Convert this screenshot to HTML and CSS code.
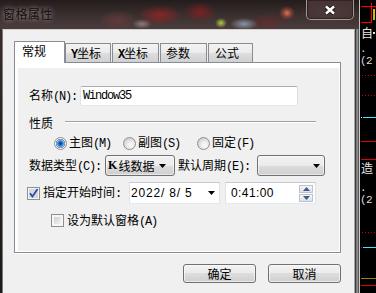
FILE: index.html
```html
<!DOCTYPE html>
<html lang="zh">
<head>
<meta charset="utf-8">
<title>窗格属性</title>
<link rel="stylesheet" href="styles.css">
</head>
<body>
<div class="screen">
  <div class="window">
    <div class="titlebar">
      <span class="title">窗格属性</span>
      <div class="close">
        <svg width="12" height="10" viewBox="0 0 12 10"><path d="M2 1.5L10 8.5M10 1.5L2 8.5" stroke="#241a1a" stroke-width="4.4"/><path d="M2 1.5L10 8.5M10 1.5L2 8.5" stroke="#ffffff" stroke-width="2.4"/></svg>
      </div>
    </div>
    <div class="frame">
      <div class="frame-left"></div>
      <div class="client">
        <div class="tabs">
          <div class="tab sel">常规</div>
          <div class="tab w46"><span class="a b">Y</span>坐标</div>
          <div class="tab w47"><span class="a b">X</span>坐标</div>
          <div class="tab w47">参数</div>
          <div class="tab w45">公式</div>
        </div>
        <div class="panel">
          <div class="page">
            <div class="row r-name">
              <span class="lbl">名称<span class="a">(N):</span></span>
              <div class="edit"><span class="a">Window35</span></div>
            </div>
            <div class="row r-group">
              <span class="lbl">性质</span><span class="sep"></span>
            </div>
            <div class="row r-radio">
              <span class="radio on"></span><span class="rl">主图<span class="a">(M)</span></span>
              <span class="radio m12"></span><span class="rl">副图<span class="a">(S)</span></span>
              <span class="radio m17"></span><span class="rl">固定<span class="a">(F)</span></span>
            </div>
            <div class="row r-data">
              <span class="lbl">数据类型<span class="a">(C):</span></span>
              <div class="combo cb1"><span class="a b k">K</span>线数据<svg class="arr" width="7" height="4" viewBox="0 0 7 4"><path d="M0 0H7L3.5 4Z"/></svg></div>
              <span class="lbl lbl2">默认周期<span class="a">(E):</span></span>
              <div class="combo cb2"><svg class="arr" width="7" height="4" viewBox="0 0 7 4"><path d="M0 0H7L3.5 4Z"/></svg></div>
            </div>
            <div class="row r-time">
              <svg class="cbx" width="13" height="13" viewBox="0 0 13 13"><rect x="0.5" y="0.5" width="12" height="12" fill="#f6f6f6" stroke="#8e8f8f"/><rect x="2" y="2" width="9" height="9" fill="#d3d8e6"/><path d="M3 6.2L5.4 9.6L10.6 2" fill="none" stroke="#2b4b9b" stroke-width="1.7"/></svg>
              <span class="tl">指定开始时间<span class="a">:</span></span>
              <div class="field date"><span class="num d">2022/ 8/ 5</span><svg class="arr" width="7" height="4" viewBox="0 0 7 4"><path d="M0 0H7L3.5 4Z"/></svg></div>
              <div class="field time"><span class="num t">0:41:00</span>
                <div class="spin">
                  <b><svg width="7" height="4" viewBox="0 0 7 4"><path d="M0 4H7L3.5 0Z" fill="#3f5b8c"/></svg></b>
                  <b><svg width="7" height="4" viewBox="0 0 7 4"><path d="M0 0H7L3.5 4Z" fill="#3f5b8c"/></svg></b>
                </div>
              </div>
            </div>
            <div class="row r-def">
              <span class="cb-off"></span>
              <span class="tl">设为默认窗格<span class="a">(A)</span></span>
            </div>
          </div>
        </div>
        <div class="buttons">
          <div class="btn">确定</div>
          <div class="btn">取消</div>
        </div>
      </div>
      <div class="frame-right"></div>
    </div>
  </div>
  <div class="chart">
    <i class="k1"></i><i class="k2"></i><i class="k3"></i><i class="k4"></i>
    <span class="ct ct1">自</span><i class="dw1"></i>
    <span class="cn cn1">.(2</span>
    <i class="dot d75"></i><i class="dot d95"></i>
    <i class="wd w117"></i><i class="cy c117"></i>
    <i class="rl2 r141"></i><i class="rl2 r159"></i>
    <span class="ct ct2">造</span>
    <span class="cn cn2">.(2</span>
    <i class="dot d232"></i>
    <i class="rd w247"></i><i class="cy c247"></i>
    <i class="ol o278"></i>
    <i class="rl2 r285"></i>
  </div>
</div>
</body>
</html>
```

FILE: styles.css
```css
* { box-sizing: border-box; }
html, body { margin: 0; padding: 0; }
body {
  width: 376px;
  height: 293px;
  overflow: hidden;
  background: #000;
  font-family: "Noto Sans CJK SC", sans-serif;
  font-size: 12px;
  color: #000;
}
.screen { display: flex; width: 376px; height: 293px; }
.window { width: 360px; height: 293px; display: flex; flex-direction: column; flex: none; }

.titlebar {
  height: 29px;
  flex: none;
  display: flex;
  align-items: flex-start;
  background:
    linear-gradient(to right, transparent 359px, #c4c4c4 359px 360px),
    radial-gradient(ellipse 6px 5px at 221px 23px, rgba(185,205,80,0.95) 0, rgba(150,170,60,0.6) 55%, transparent 100%),
    radial-gradient(ellipse 8px 7px at 287px 13px, rgba(225,120,80,0.95) 0, rgba(180,80,60,0.5) 55%, transparent 100%),
    radial-gradient(ellipse 14px 6px at 244px 24px, rgba(150,165,185,0.85) 0, transparent 100%),
    radial-gradient(ellipse 10px 5px at 142px 24px, rgba(160,140,140,0.8) 0, transparent 100%),
    radial-gradient(ellipse 22px 10px at 160px 15px, rgba(150,35,35,0.85) 0, transparent 100%),
    radial-gradient(ellipse 16px 10px at 200px 12px, rgba(140,30,30,0.8) 0, transparent 100%),
    radial-gradient(ellipse 20px 10px at 118px 20px, rgba(110,60,60,0.7) 0, transparent 100%),
    radial-gradient(ellipse 18px 9px at 268px 22px, rgba(110,40,40,0.6) 0, transparent 100%),
    radial-gradient(ellipse 30px 12px at 330px 14px, rgba(90,70,70,0.6) 0, transparent 100%),
    linear-gradient(#241c1c, #3c3030 55%, #4c3d3d);
}
.title {
  margin: 7px 0 0 3px;
  font-size: 12px;
  line-height: 14px;
  letter-spacing: 0.4px;
  color: #120d0d;
  text-shadow: 0 0 4px rgba(230,215,215,0.55), 0 0 8px rgba(230,215,215,0.3);
}
.close {
  margin-left: auto;
  margin-right: 6px;
  width: 48px;
  height: 20px;
  border: 1px solid rgba(185,175,175,0.8);
  border-top: none;
  border-radius: 0 0 5px 5px;
  box-shadow: inset 0 0 0 1px rgba(30,20,20,0.55);
  background: linear-gradient(rgba(95,70,70,0.6), rgba(70,50,50,0.6));
  display: flex;
  align-items: center;
  justify-content: center;
}

.frame { flex: 1; display: flex; min-height: 0; }
.frame-left { width: 2px; flex: none; background: linear-gradient(#3a2c2c, #2a2222 40%, #1e1a1a); }
.frame-right {
  width: 5px;
  flex: none;
  background: linear-gradient(to right, #3a3a3a 0 1px, #7a7a7a 1px 2px, #8e8e8e 2px 3px, #5c5c5c 3px 4px, #cdcdcd 4px 5px);
}
.client {
  width: 353px;
  flex: none;
  border-left: 1px solid #7a7a7a;
  border-right: 1px solid #a8a8a8;
  border-top: 1px solid #cfcfcf;
  background: #f0f0f0;
  padding: 11px 13px 0 11px;
  display: flex;
  flex-direction: column;
}

.a {
  font-family: "Liberation Mono", monospace;
  font-size: 12px;
  letter-spacing: -1.2px;
}
.b { font-weight: bold; }

.tabs { display: flex; align-items: flex-start; height: 22px; flex: none; }
.tab {
  height: 20px;
  margin-top: 2px;
  margin-left: 1px;
  border: 1px solid #898c95;
  border-bottom: none;
  background: linear-gradient(#f2f2f2, #ebebeb 50%, #dddddd 50%, #cfcfcf);
  padding: 1px 0 0 5px;
  line-height: 16px;
  white-space: nowrap;
}
.tab.sel {
  position: relative;
  z-index: 1;
  width: 51px;
  height: 22px;
  margin: 0;
  background: #fff;
  padding: 1px 0 0 7px;
}
.tab.sel + .tab { margin-left: 0; }
.w45 { width: 45px; padding-left: 6px; }
.w46 { width: 46px; }
.w47 { width: 47px; }

.panel {
  margin-top: -1px;
  height: 191px;
  flex: none;
  border: 1px solid #898c95;
  background: #fff;
  padding: 5px 1px 1px 3px;
  box-shadow: 0 1px 0 #ffffff;
}
.page {
  height: 100%;
  background: #f0f0f0;
  padding: 18px 0 0 11px;
}
.row { display: flex; align-items: center; white-space: nowrap; }
.lbl, .rl, .tl { line-height: 16px; }

.r-name { height: 20px; }
.edit {
  margin-left: 3px;
  width: 218px;
  height: 20px;
  border: 1px solid;
  border-color: #abadb3 #dbdfe6 #e3e9ef #e2e3ea;
  border-radius: 2px;
  background: #fff;
  display: flex;
  align-items: center;
  padding-left: 2px;
}

.r-group { height: 16px; margin-top: 9px; }
.sep {
  width: 251px;
  margin-left: 12px;
  align-self: flex-start;
  margin-top: 6px;
  border-top: 1px solid #a0a0a0;
  border-bottom: 1px solid #ffffff;
}

.r-radio { height: 16px; margin-top: 4px; padding-left: 25px; }
.radio {
  width: 13px;
  height: 13px;
  flex: none;
  border-radius: 50%;
  border: 1px solid #8e8f8f;
  background: radial-gradient(circle at 62% 66%, #fbfbfb 0, #ececec 35%, #d0d1d3 75%, #babbbd 100%);
}
.radio.on {
  background: radial-gradient(circle at 50% 50%, #0d3b75 0, #1a63b5 1.6px, #4b9ce0 3px, #a3d2f6 3.7px, #58779c 4.3px, #f4f4f4 5px, #e2e2e2 100%);
}
.rl { margin-left: 2px; }
.m12 { margin-left: 12px; }
.m17 { margin-left: 17px; }

.r-data { height: 21px; margin-top: 4px; }
.combo {
  height: 21px;
  border: 1px solid #707070;
  border-radius: 3px;
  background: linear-gradient(#f2f2f2, #ebebeb 50%, #dddddd 50%, #cfcfcf);
  box-shadow: inset 0 0 0 1px rgba(255,255,255,0.55);
  display: flex;
  align-items: center;
}
.cb1 { width: 70px; margin-left: 4px; padding-left: 2px; }
.k { font-family: "Liberation Serif", serif; font-size: 12px; letter-spacing: 0; margin-right: 1px; }
.cb1 .arr { margin-left: auto; margin-right: 8px; }
.lbl2 { margin-left: 3px; }
.cb2 { width: 68px; margin-left: 7px; }
.cb2 .arr { margin-left: auto; margin-right: 4px; }

.r-time { height: 22px; margin-top: 6px; }
.cbx { margin-left: -2px; flex: none; }
.tl { margin-left: 3px; }
.field {
  width: 91px;
  height: 22px;
  border: 1px solid;
  border-color: #c5c8cf #dfe2e8 #e3e9ef #dfe2e8;
  background: #fff;
  display: flex;
  align-items: center;
}
.num { font-family: "Liberation Sans", sans-serif; font-size: 12px; }
.date { margin-left: 8px; padding-left: 1px; }
.num.d { letter-spacing: 0.8px; }
.date .arr { margin-left: auto; margin-right: 4px; }
.time { margin-left: 5px; padding-left: 5px; }
.num.t { letter-spacing: 0.4px; }
.spin { margin-left: auto; margin-right: 2px; display: flex; flex-direction: column; gap: 1px; }
.spin b {
  width: 14px;
  height: 8px;
  border: 1px solid #bcc3cf;
  background: linear-gradient(#f7f7f7, #dde0e5);
  display: flex;
  align-items: center;
  justify-content: center;
}

.r-def { height: 15px; margin-top: 9px; }
.cb-off {
  margin-left: 22px;
  width: 13px;
  height: 13px;
  flex: none;
  border: 1px solid #8e8f8f;
  padding: 2px;
  background: linear-gradient(135deg, #cbced3, #f5f5f5) content-box, #f6f6f6;
}

.buttons { display: flex; justify-content: flex-end; gap: 12px; margin-top: 11px; flex: none; }
.btn {
  width: 73px;
  height: 19px;
  border: 1px solid #707070;
  border-radius: 3px;
  background: linear-gradient(#f2f2f2, #ebebeb 50%, #dddddd 50%, #cfcfcf);
  box-shadow: inset 0 0 0 1px rgba(255,255,255,0.6);
  display: flex;
  align-items: center;
  justify-content: center;
  line-height: 16px;
}

/* chart canvas on the right */
.chart { position: relative; width: 16px; height: 293px; flex: none; background: #000; overflow: hidden; }
.chart i { position: absolute; display: block; }
.k1 { left: 1px; top: 6px; width: 15px; height: 1px; background: #f00; }
.k2 { left: 11px; top: 3px; width: 1px; height: 20px; background: #f00; }
.k3 { left: 1px; top: 22px; width: 10px; height: 1px; background: #f00; }
.k4 { left: 13px; top: 9px; width: 2px; height: 11px; background: #d6b800; }
.ct { position: absolute; left: 1px; font-size: 12px; line-height: 13px; color: #e6e6e6; }
.ct1 { top: 26px; }
.ct2 { top: 161px; }
.dw1 { left: 13px; top: 32px; width: 2px; height: 2px; background: #e6e6e6; }
.cn { position: absolute; left: 0; font-family: "Liberation Mono", monospace; font-size: 11px; line-height: 12px; color: #dcdcdc; letter-spacing: -0.6px; }
.cn1 { top: 43px; }
.cn2 { top: 182px; }
.dot { left: 2px; width: 14px; height: 1px; background: repeating-linear-gradient(to right, #c80000 0 1px, transparent 1px 3px); }
.d75 { top: 75px; }
.d95 { top: 95px; }
.d232 { top: 232px; }
.wd { left: 1px; width: 1px; height: 1px; background: #fff; }
.rd { left: 1px; width: 1px; height: 1px; background: #d00; }
.w117 { top: 117px; }
.w247 { top: 247px; }
.cy { left: 3px; width: 13px; height: 1px; background: #3ee6ff; }
.c117 { top: 117px; }
.c247 { top: 247px; }
.rl2 { left: 1px; width: 15px; height: 1px; background: #e00000; }
.r141 { top: 141px; }
.r159 { top: 159px; }
.r285 { top: 285px; }
.ol { left: 1px; width: 15px; height: 1px; background: #8c8c00; }
.o278 { top: 278px; }
```
